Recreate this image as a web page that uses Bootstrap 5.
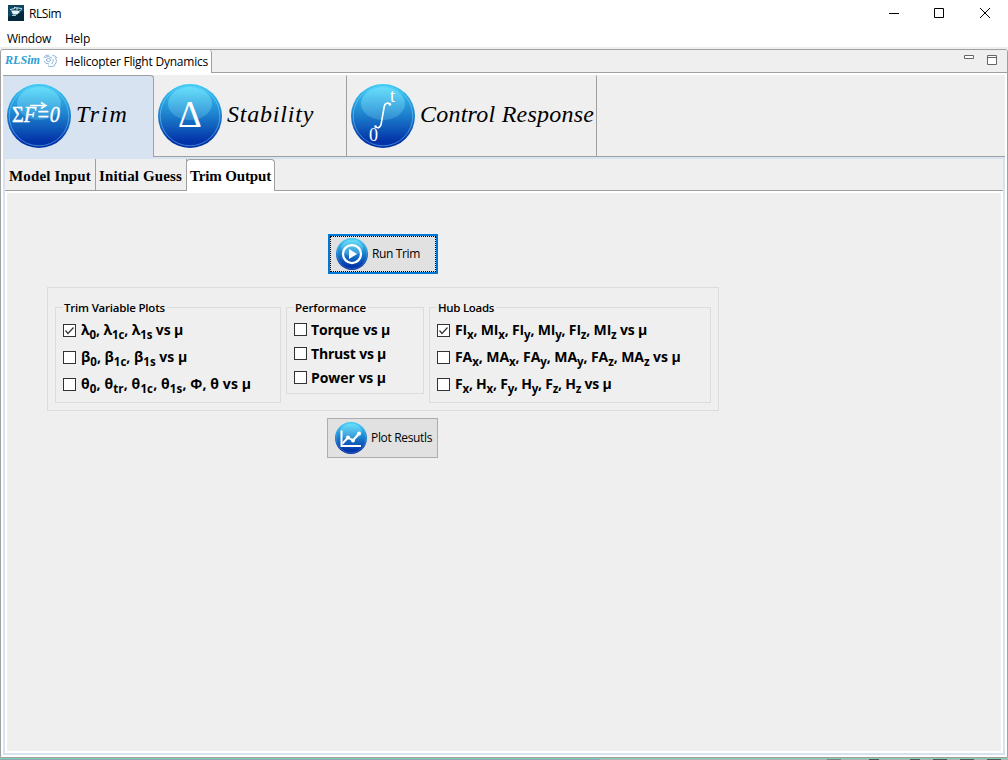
<!DOCTYPE html>
<html lang="en">
<head>
<meta charset="utf-8">
<title>RLSim</title>
<link href="https://cdn.jsdelivr.net/npm/bootstrap@5.3.0/dist/css/bootstrap.min.css" rel="stylesheet">
<style>
body{width:1008px;height:760px;overflow:hidden;background:#fff;color:#000;font:12px/16px "Open Sans","Noto Sans",sans-serif}
.t{white-space:nowrap;display:inline-block}
.titlebar{height:28px}
.menubar{height:19px;padding-top:3px}
.winctl{width:45px;height:28px}
.appicon{margin-top:-2px}
.frame{height:711px;background:#efefef;padding-top:2px}
.view{height:709px;border:1px solid #a0a0a0;border-radius:3px 3px 0 0;background:#fff}
.viewhead{height:23px;background:#efefef;border-bottom:1px solid #a0a0a0;border-radius:3px 3px 0 0}
.viewtab{width:211px;height:23px;background:#fff;border-right:1px solid #a0a0a0;border-radius:3px 3px 0 0}
.outer{margin:2px 2px 0;height:680px;border:solid #d7e3f1;border-width:0 2px 2px;background:#fff}
.maintabs{margin:0 -2px;height:84px;background:#d7e3f1}
.mt{height:82px;background:#efefef;border-right:1px solid #a0a0a0;border-bottom:1px solid #a0a0a0;border-top:1px solid #efefef;padding:8px 0 0 4px}
.mt.on{background:#d7e3f1;width:151px;border-bottom:0;border-top:1px solid #a0a0a0;border-radius:0 4px 0 0}
.mt svg{flex:none}
.mt.stab{width:193px}
.mt.resp{width:250px}
.rest{height:82px;background:#efefef;border-bottom:1px solid #a0a0a0}
.script{font:italic 24px/32px "Liberation Serif",serif;margin:14px 0 0 5px}
.subtabs{height:32px;background:#efefef;border-bottom:1px solid #a0a0a0}
.st{width:91px;height:31px;font:bold 15px/18px "Liberation Serif",serif;border-right:1px solid #a0a0a0;padding:8px 0 0 4px}
.st.on{width:89px;height:32px;background:#fff;border:1px solid #a0a0a0;border-bottom:0;border-radius:4px 4px 0 0;margin-left:-1px;padding:7px 0 0 3px}
.page{margin:2px 2px 0;height:558px;background:#efefef;padding:41px 0 0 40px}
.push{background:#e1e1e1;border:1px solid #adadad;border-radius:0;height:40px;width:111px;padding:0 0 0 7px;margin-left:280px;font-size:12px;color:#000}
.push svg{flex:none;margin-right:4px}
.push.def{border:2px solid #0078d7;width:110px;outline:1px dotted #000;outline-offset:-3px;margin-left:281px;padding-left:6px}
.group{width:672px;height:124px;border:1px solid #dcdcdc;margin:13px 0 7px;padding:19px 7px 0;gap:5px}
.box{border:1px solid #dcdcdc;height:96px;padding:0 0 0 7px}
.box1{width:226px}.box2{width:138px;height:87px}.box3{width:282px}
.box .cap{font-weight:600;font-size:11.5px;line-height:16px;background:#efefef;padding:0 2px 0 1px;margin:-8px 0 0 0;display:table}
.opt{height:27px;font-weight:700;font-size:14px}
.opt.sm{height:24px}
.opt.sm .t{padding-top:4px;margin-left:-1px}
.chk{width:13px;height:13px;border:1px solid #333;background:#fff;flex:none;margin:2px 5px 0 0;display:flex}
.opt sub{font-size:11.5px;bottom:-4px;line-height:0}
.t1{letter-spacing:-.45px;margin-left:5px}.t2{letter-spacing:-.22px;margin-left:7px}.t3{letter-spacing:-.24px;margin-left:14px}.t4{letter-spacing:-.226px;margin:4px 0 0 4px}
.s1{letter-spacing:1.8px}.s2{letter-spacing:.8px}.s3{letter-spacing:.23px}
.b1{letter-spacing:.14px}.b2{letter-spacing:.13px;margin-left:-1px}.b3{letter-spacing:-.14px}
.p1{letter-spacing:-.36px}.p2{letter-spacing:-.34px}
.c1{letter-spacing:-.2px}.c2{letter-spacing:-.1px}.c3{letter-spacing:-.3px}
.o1{letter-spacing:-.1px}.o2{letter-spacing:.02px}.o3{letter-spacing:.13px}
.o4{letter-spacing:-.17px}.o5{letter-spacing:-.2px}.o6{letter-spacing:-.05px}
.o7{letter-spacing:-.17px}.o8{letter-spacing:-.07px}.o9{letter-spacing:-.22px}
.edge{height:1px;background:#80d0ae}
.behind{height:1px;background:linear-gradient(90deg,#8fa5b8 0 600px,#b4b4b4 600px 827px,#808080 827px 841px,#b4b4b4 841px 869px,#555 869px 879px,#b4b4b4 879px 910px,#555 910px 920px,#b4b4b4 920px 933px,#555 933px 947px,#b4b4b4 947px 960px,#555 960px 974px,#b4b4b4 974px 987px,#555 987px 1001px,#b4b4b4 1001px)}
</style>
</head>
<body>
<svg width="0" height="0" class="position-absolute"><defs>
<linearGradient id="g" x1="0" y1="0" x2="0" y2="1"><stop offset="0" stop-color="#3ccdf5"/><stop offset=".45" stop-color="#1f86d0"/><stop offset=".9" stop-color="#0232a8"/></linearGradient>
<linearGradient id="h" x1="0" y1="0" x2="0" y2="1"><stop offset="0" stop-color="#6fe2fc" stop-opacity=".85"/><stop offset="1" stop-color="#4aa4dc" stop-opacity=".5"/></linearGradient>
<g id="ball"><circle cx="32" cy="32" r="32" fill="url(#g)"/><circle cx="32" cy="32" r="29.8" fill="none" stroke="#8fdcff" stroke-opacity=".45"/><ellipse cx="32" cy="19.500" rx="22" ry="16.500" fill="url(#h)"/></g>
</defs></svg>
<div class="titlebar d-flex align-items-center">
<svg class="appicon ms-2" width="16" height="16"><rect width="16" height="16" fill="#0b4560"/><path d="M0 16V12L16 6V16Z" fill="#06283c"/><path d="M2 4.500L7 3.500M6 2.500L14 3.500M9 3V5" stroke="#cfe6ee" fill="none"/><path d="M3 5.500H10L12 7L9 9.500H5Z" fill="#e4f4fa"/><path d="M11 6L14 4.500M4 10.500H8" stroke="#9cc6d6"/></svg>
<span class="t t1">RLSim</span>
<div class="ms-auto d-flex"><svg class="winctl" viewBox="0 0 45 28"><path d="M16 13.500H26" stroke="#000"/></svg><svg class="winctl" viewBox="0 0 45 28"><path d="M16.500 8.500h9v9h-9z" stroke="#000" fill="none"/></svg><svg class="winctl" viewBox="0 0 45 28"><path d="M17 8l10 10M27 8L17 18" stroke="#000"/></svg></div>
</div>
<div class="menubar d-flex"><span class="t t2">Window</span><span class="t t3">Help</span></div>
<div class="frame"><div class="view">
<div class="viewhead d-flex"><div class="viewtab d-flex">
<svg class="flex-shrink-0" width="60" height="22" viewBox="0 0 60 22"><text x="4" y="14" font-family="Liberation Serif" font-size="13" font-weight="bold" font-style="italic" fill="#2d9fd3" textLength="35" lengthAdjust="spacingAndGlyphs">RLSim</text><g fill="none" stroke="#8ab6dc" stroke-width="1"><ellipse cx="47.500" cy="10" rx="2" ry="1.500"/><path d="M44 7.500Q47 5 51 8M43 11Q44 14 48 14M42.500 8Q44 4.500 48 5M52 9Q53 12 50.500 14M54 7.500Q57 11 53.500 15M51.500 5.500Q54 5 56 8M47 16Q51 17.500 54 15.500"/></g></svg>
<span class="t t4">Helicopter Flight Dynamics</span></div>
<svg class="ms-auto" width="50" height="22" viewBox="957 50 50 22"><path d="M964.500 55.500h9v3h-9zM987.500 55.500h9v9h-9zM987.500 57.500h9" fill="#fff" stroke="#666"/></svg>
</div>
<div class="outer">
<div class="maintabs d-flex">
<div class="mt on d-flex"><svg width="64" height="64"><use href="#ball"/><text x="5" y="38" fill="#fff" stroke="#fff" stroke-width=".4" font-family="Liberation Serif" font-size="23" textLength="48" lengthAdjust="spacingAndGlyphs">Σ<tspan font-style="italic">F=0</tspan></text><path d="M23 21.500H38M34 18.500L39 21.500L34 24.500" stroke="#fff" stroke-width="1.500" fill="none"/></svg><span class="t script s1">Trim</span></div>
<div class="mt stab d-flex"><svg width="64" height="64"><use href="#ball"/><text x="32" y="43" text-anchor="middle" font-family="Liberation Serif" font-size="37" fill="#fff">Δ</text></svg><span class="t script s2">Stability</span></div>
<div class="mt resp d-flex"><svg width="64" height="64"><use href="#ball"/><path d="M39.500 20.500C36 18 33.500 19 33 24L30.500 38C30 43.500 27 45 24 42.500" fill="none" stroke="#fff" stroke-width="1.600"/><circle cx="39" cy="20.500" r="1.200" fill="#fff"/><circle cx="24.500" cy="42.500" r="1.200" fill="#fff"/><g fill="#fff" font-family="Liberation Serif" font-size="18"><text x="39" y="18">t</text><text x="18" y="57">0</text></g></svg><span class="t script s3">Control Response</span></div>
<div class="rest flex-fill"></div>
</div>
<div class="subtabs d-flex">
<div class="st"><span class="t b1">Model Input</span></div>
<div class="st"><span class="t b2">Initial Guess</span></div>
<div class="st on"><span class="t b3">Trim Output</span></div>
</div>
<div class="page">
<button class="btn push def d-flex align-items-center"><svg width="32" height="32" viewBox="0 0 64 64"><use href="#ball"/><circle cx="32" cy="32" r="18" fill="none" stroke="#fff" stroke-width="4.500"/><path d="M26 22L42 32L26 42Z" fill="#fff"/></svg><span class="t p1">Run Trim</span></button>
<div class="group d-flex">
<div class="box box1"><div class="cap"><span class="t c1">Trim Variable Plots</span></div>
<div class="opt d-flex align-items-center"><i class="chk"><svg width="11" height="11"><path d="M1.500 5.500L4 8.500L9.500 2.500" fill="none" stroke="#333" stroke-width="1.200"/></svg></i><span class="t o1">λ<sub>0</sub>, λ<sub>1c</sub>, λ<sub>1s</sub> vs μ</span></div>
<div class="opt d-flex align-items-center"><i class="chk"></i><span class="t o2">β<sub>0</sub>, β<sub>1c</sub>, β<sub>1s</sub> vs μ</span></div>
<div class="opt d-flex align-items-center"><i class="chk"></i><span class="t o3">θ<sub>0</sub>, θ<sub>tr</sub>, θ<sub>1c</sub>, θ<sub>1s</sub>, Φ, θ vs μ</span></div></div>
<div class="box box2"><div class="cap"><span class="t c2">Performance</span></div>
<div class="opt sm d-flex align-items-center"><i class="chk"></i><span class="t o4">Torque vs μ</span></div>
<div class="opt sm d-flex align-items-center"><i class="chk"></i><span class="t o5">Thrust vs μ</span></div>
<div class="opt sm d-flex align-items-center"><i class="chk"></i><span class="t o6">Power vs μ</span></div></div>
<div class="box box3"><div class="cap"><span class="t c3">Hub Loads</span></div>
<div class="opt d-flex align-items-center"><i class="chk"><svg width="11" height="11"><path d="M1.500 5.500L4 8.500L9.500 2.500" fill="none" stroke="#333" stroke-width="1.200"/></svg></i><span class="t o7">FI<sub>x</sub>, MI<sub>x</sub>, FI<sub>y</sub>, MI<sub>y</sub>, FI<sub>z</sub>, MI<sub>z</sub> vs μ</span></div>
<div class="opt d-flex align-items-center"><i class="chk"></i><span class="t o8">FA<sub>x</sub>, MA<sub>x</sub>, FA<sub>y</sub>, MA<sub>y</sub>, FA<sub>z</sub>, MA<sub>z</sub> vs μ</span></div>
<div class="opt d-flex align-items-center"><i class="chk"></i><span class="t o9">F<sub>x</sub>, H<sub>x</sub>, F<sub>y</sub>, H<sub>y</sub>, F<sub>z</sub>, H<sub>z</sub> vs μ</span></div></div>
</div>
<button class="btn push d-flex align-items-center"><svg width="32" height="32" viewBox="0 0 64 64"><use href="#ball"/><path d="M13 17V48H52" fill="none" stroke="#fff" stroke-width="4"/><path d="M15 43L26 31L36 37L48 23" fill="none" stroke="#fff" stroke-width="4"/><circle cx="26" cy="31" r="4" fill="#fff"/><circle cx="36" cy="37" r="4" fill="#fff"/><circle cx="48" cy="23" r="4" fill="#fff"/></svg><span class="t p2">Plot Resutls</span></button>
</div></div></div></div>
<div class="edge"></div><div class="behind"></div>
<script src="https://cdn.jsdelivr.net/npm/bootstrap@5.3.0/dist/js/bootstrap.bundle.min.js"></script>
</body>
</html>
